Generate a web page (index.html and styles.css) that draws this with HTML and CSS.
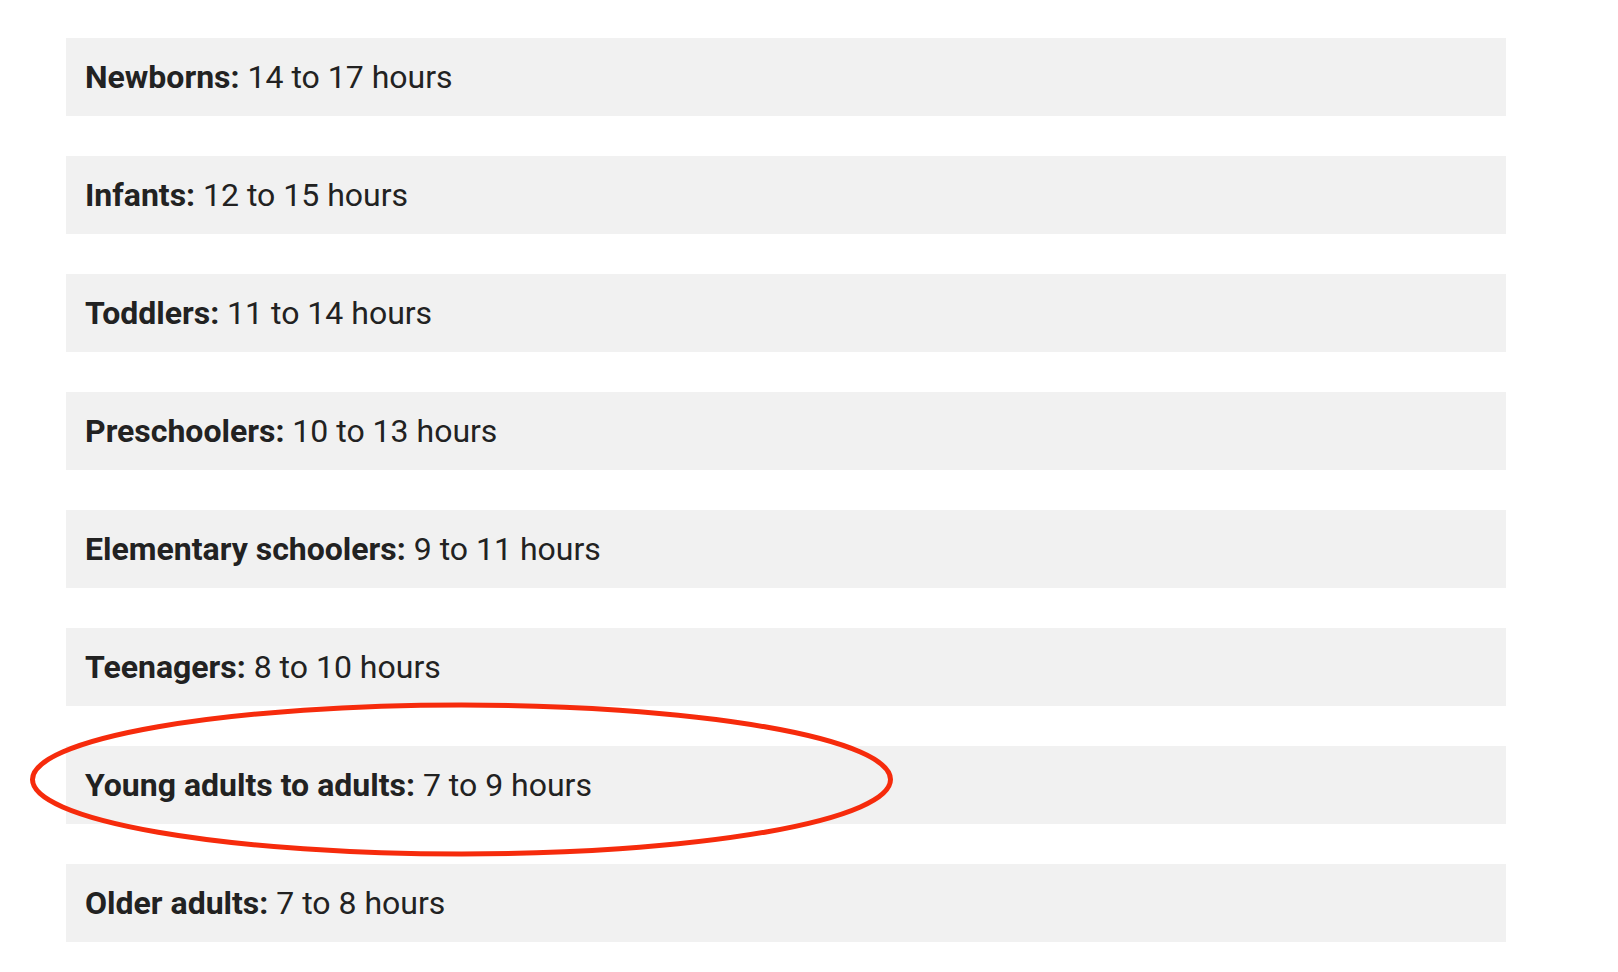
FILE: index.html
```html
<!DOCTYPE html>
<html lang="en">
<head>
  <meta charset="UTF-8">
  <title>How much sleep do you need?</title>
  <link rel="stylesheet" href="styles.css">
</head>
<body>

<!-- SLEEP RECOMMENDATIONS BY AGE -->
<div class="sleep-list">
  <div class="sleep-row"><strong>Newborns:</strong>&nbsp;14 to 17 hours</div>
  <div class="sleep-row"><strong>Infants:</strong>&nbsp;12 to 15 hours</div>
  <div class="sleep-row"><strong>Toddlers:</strong>&nbsp;11 to 14 hours</div>
  <div class="sleep-row"><strong>Preschoolers:</strong>&nbsp;10 to 13 hours</div>
  <div class="sleep-row"><strong>Elementary schoolers:</strong>&nbsp;9 to 11 hours</div>
  <div class="sleep-row"><strong>Teenagers:</strong>&nbsp;8 to 10 hours</div>
  <div class="sleep-row"><strong>Young adults to adults:</strong>&nbsp;7 to 9 hours</div>
  <div class="sleep-row"><strong>Older adults:</strong>&nbsp;7 to 8 hours</div>

  <!-- hand-drawn highlight around the adults row -->
  <svg class="highlight" width="900" height="170" viewBox="0 0 900 170">
    <ellipse cx="461.5" cy="79.5" rx="429" ry="74.5" fill="none" stroke="#f62b0c" stroke-width="5"/>
  </svg>
</div>

</body>
</html>
```

FILE: styles.css
```css
/* --- Global --- */
body { margin: 0; background: #fff; font-family: Roboto, "Liberation Sans", sans-serif; color: #222; }

/* --- List of rows --- */
.sleep-list {
  position: relative;
  width: 1440px;
  padding: 38px 0 0 66px;
  display: flex;
  flex-direction: column;
  gap: 40.5px;
}

.sleep-row {
  display: flex;
  align-items: center;
  height: 77.5px;
  padding-left: 19px;
  background: #f1f1f1;
  font-size: 32px;
}

.sleep-row strong { font-weight: 700; }

/* --- Red circle annotation --- */
.highlight {
  position: absolute;
  left: 0;
  top: 700px;
  pointer-events: none;
}
```
